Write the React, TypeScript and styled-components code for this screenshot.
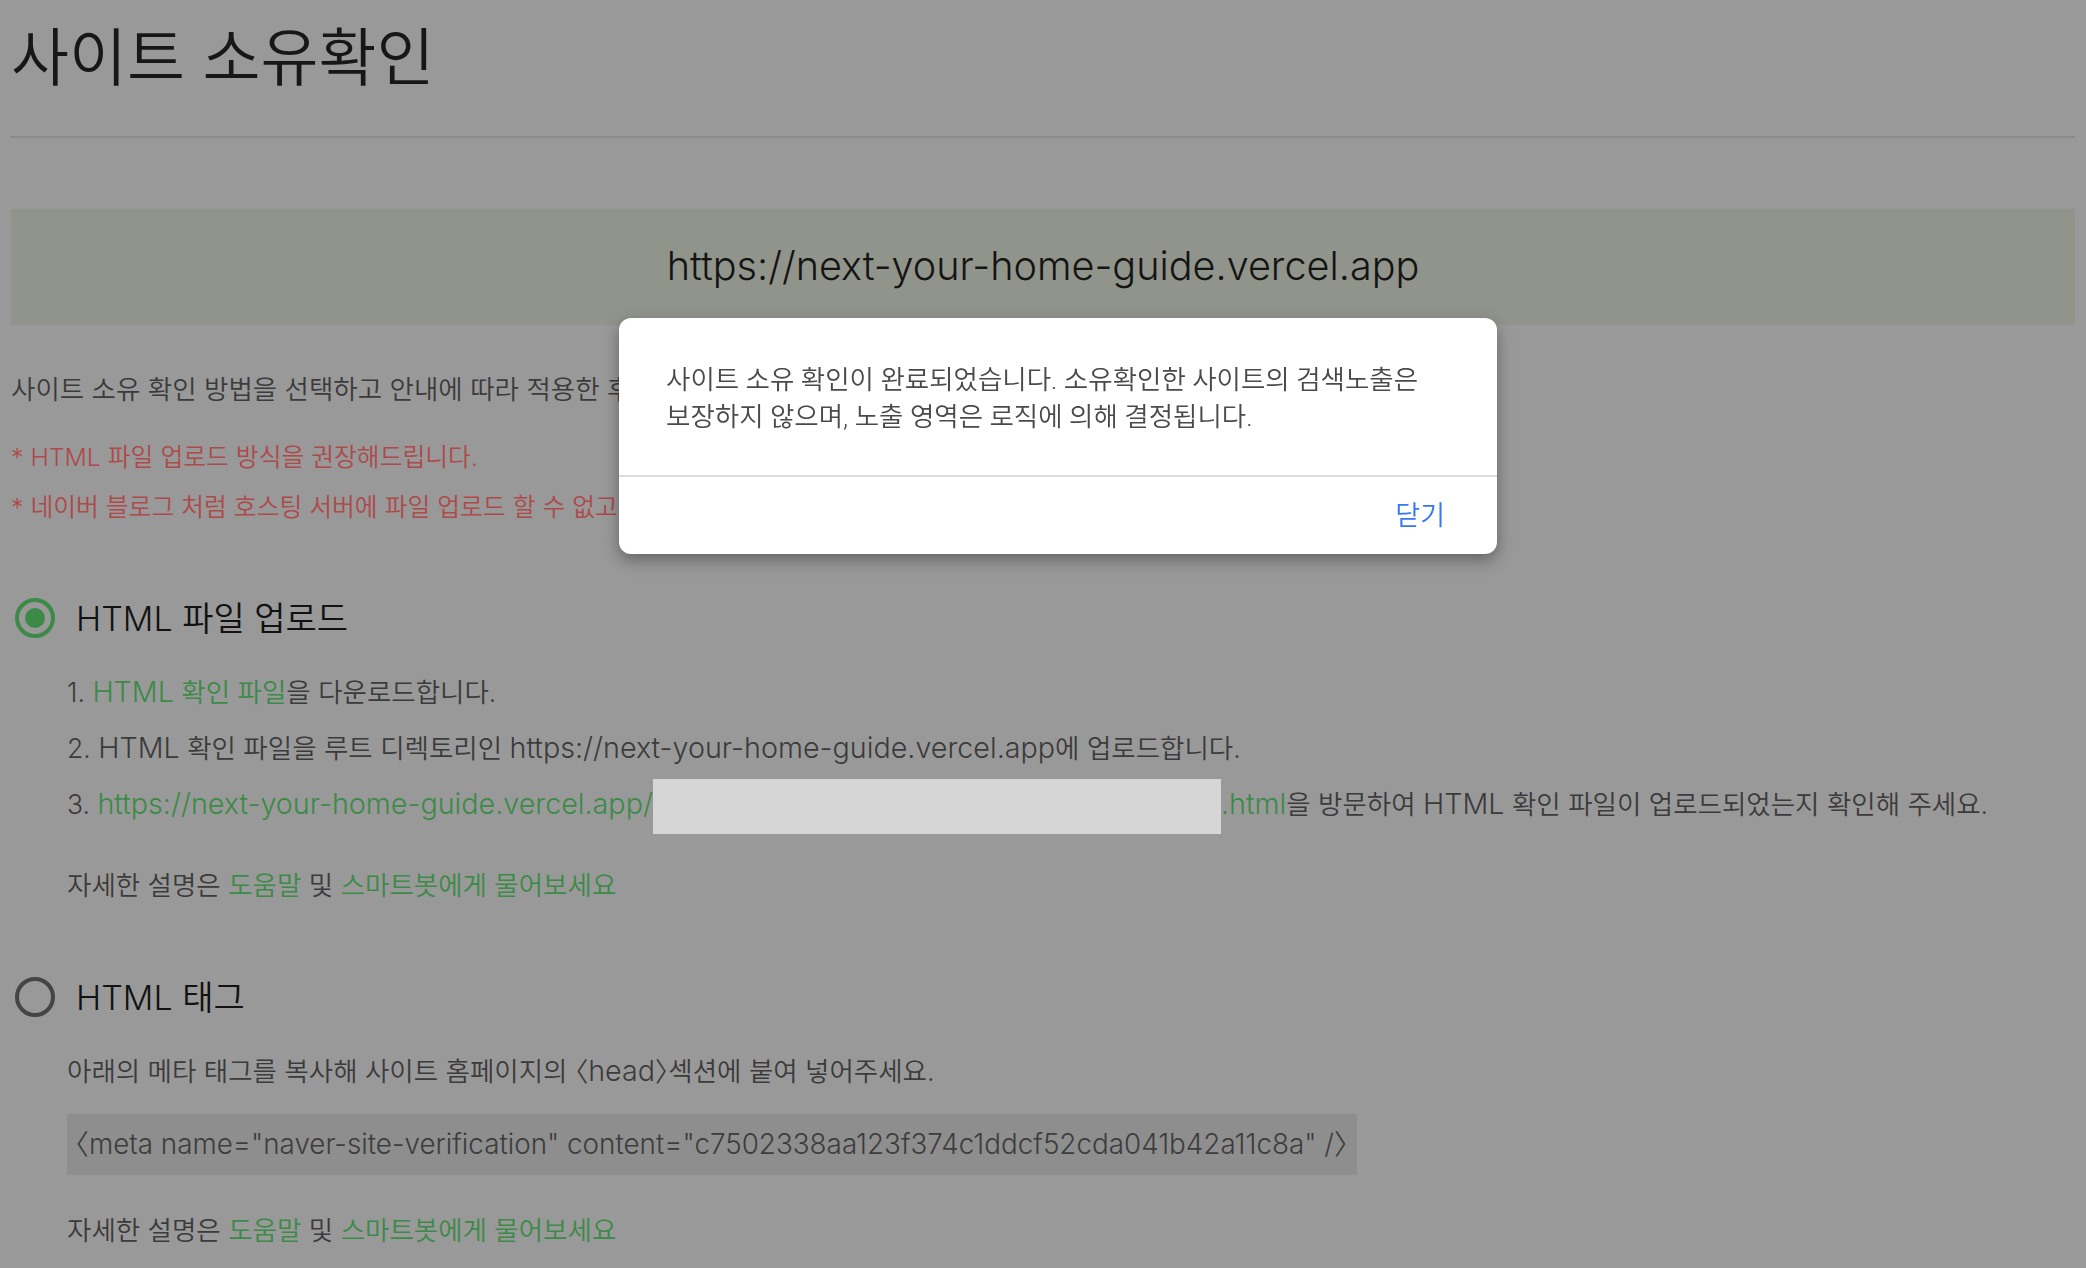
import React from "react";
import styled, { createGlobalStyle } from "styled-components";

const GlobalStyle = createGlobalStyle`
  html, body {
    margin: 0;
    padding: 0;
    overflow: hidden;
    background: #999999;
  }
  body {
    font-family: Inter, "Noto Sans CJK KR", sans-serif;
    font-weight: 350;
  }
`;

const Page = styled.div`
  padding: 0 11px;
  min-height: 1268px;
  box-sizing: border-box;
`;

const Title = styled.h1`
  margin: 21px 0 0;
  font-size: 63px;
  line-height: 72px;
  font-weight: 350;
  color: #171717;
`;

const Divider = styled.hr`
  margin: 43px 0 0;
  border: 0;
  height: 2px;
  background: #8a8a8a;
`;

const UrlBox = styled.div`
  margin-top: 71px;
  height: 116px;
  display: flex;
  align-items: center;
  justify-content: center;
  padding-bottom: 2px;
  box-sizing: border-box;
  background: #91948a;
  font-size: 39.6px;
  color: #141414;
`;

const Text = styled.p<{ $top: number; $indent?: boolean; $color?: string; $size?: number }>`
  margin: ${(p) => p.$top}px 0 0;
  padding-left: ${(p) => (p.$indent ? 56 : 0)}px;
  font-size: ${(p) => p.$size || 26.5}px;
  line-height: 36px;
  color: ${(p) => p.$color || "#3b3b3b"};
  white-space: nowrap;
`;

/* latin runs sit a little larger next to hangul in the original face */
const En = styled.span`
  font-size: 1.083em;
  line-height: 0;
`;

const Link = styled.span`
  color: #3b8a47;
`;

const Bracket = styled.span`
  font-family: "Noto Sans CJK KR", sans-serif;
  font-feature-settings: "halt";
`;

const MethodHeader = styled.div<{ $top: number }>`
  margin-top: ${(p) => p.$top}px;
  display: flex;
  align-items: center;
  gap: 21px;
  padding-left: 4px;
  height: 48px;
`;

const Radio = styled.span<{ $checked?: boolean }>`
  width: 40px;
  height: 40px;
  box-sizing: border-box;
  border-radius: 50%;
  border: 4px solid ${(p) => (p.$checked ? "#3b8a47" : "#454545")};
  display: flex;
  align-items: center;
  justify-content: center;
  &::after {
    content: "";
    display: ${(p) => (p.$checked ? "block" : "none")};
    width: 20px;
    height: 20px;
    border-radius: 50%;
    background: #3b8a47;
  }
`;

const MethodTitle = styled.span`
  font-size: 34px;
  line-height: 48px;
  color: #121212;
  position: relative;
  top: 1px;
`;

const Redacted = styled.span`
  display: inline-block;
  vertical-align: middle;
  width: 568px;
  height: 55px;
  margin: -10px 0;
  background: #d6d6d6;
`;

const CodeBox = styled.div`
  margin: 25px 0 0 56px;
  width: 1290px;
  height: 61px;
  box-sizing: border-box;
  padding: 0 8px;
  background: #8e8e8e;
  font-size: 27.8px;
  line-height: 57px;
  color: #3d3d3d;
  white-space: nowrap;
`;

const Backdrop = styled.div`
  position: fixed;
  inset: 0;
`;

const Dialog = styled.div`
  position: absolute;
  left: 619px;
  top: 318px;
  width: 878px;
  background: #ffffff;
  border-radius: 12px;
  box-shadow: 0 6px 16px rgba(0, 0, 0, 0.35);
  overflow: hidden;
`;

const DialogBody = styled.div`
  padding: 43px 47px 40px;
  font-family: Roboto, "Noto Sans CJK KR", sans-serif;
  font-size: 26.5px;
  line-height: 37px;
  color: #4a4a4a;
`;

const DialogFooter = styled.div`
  border-top: 2px solid #dcdcdc;
  height: 77px;
  display: flex;
  align-items: center;
  justify-content: flex-end;
  padding-right: 52px;
`;

const CloseButton = styled.button`
  border: 0;
  background: none;
  padding: 0;
  font-family: inherit;
  font-weight: inherit;
  font-size: 27px;
  line-height: 36px;
  color: #3478f6;
  cursor: pointer;
`;

const HelpLine = ({ top }: { top: number }) => (
  <Text $top={top} $indent>
    자세한 설명은 <Link>도움말</Link> 및 <Link>스마트봇에게 물어보세요</Link>
  </Text>
);

export default function App() {
  const site = "https://next-your-home-guide.vercel.app";
  return (
    <>
      <GlobalStyle />
      <Page>
        <Title>사이트 소유확인</Title>
        <Divider />
        <UrlBox>{site}</UrlBox>
        <Text $top={46}>
          사이트 소유 확인 방법을 선택하고 안내에 따라 적용한 후 소유확인 버튼을 클릭하세요.
        </Text>
        <Text $top={32} $size={24.8} $color="#ad4a4a">
          * HTML 파일 업로드 방식을 권장해드립니다.
        </Text>
        <Text $top={14} $size={24.8} $color="#ad4a4a">
          * 네이버 블로그 처럼 호스팅 서버에 파일 업로드 할 수 없고, HTML 태그 방식을 이용해 주세요.
        </Text>

        <MethodHeader $top={69}>
          <Radio $checked />
          <MethodTitle>HTML 파일 업로드</MethodTitle>
        </MethodHeader>
        <Text $top={32} $indent>
          1. <Link><En>HTML</En> 확인 파일</Link>을 다운로드합니다.
        </Text>
        <Text $top={20} $indent>
          2. <En>HTML</En> 확인 파일을 루트 디렉토리인 <En>{site}</En>에 업로드합니다.
        </Text>
        <Text $top={20} $indent>
          3. <Link><En>{site}/</En></Link>
          <Redacted />
          <Link><En>.html</En></Link>을 방문하여 <En>HTML</En> 확인 파일이 업로드되었는지 확인해 주세요.
        </Text>
        <HelpLine top={43} />

        <MethodHeader $top={70}>
          <Radio />
          <MethodTitle>HTML 태그</MethodTitle>
        </MethodHeader>
        <Text $top={31} $indent>
          아래의 메타 태그를 복사해 사이트 홈페이지의 <Bracket>〈</Bracket><En>head</En><Bracket>〉</Bracket>섹션에 붙여 넣어주세요.
        </Text>
        <CodeBox>
          <Bracket>〈</Bracket>meta name="naver-site-verification" content="c7502338aa123f374c1ddcf52cda041b42a11c8a" /
          <Bracket>〉</Bracket>
        </CodeBox>
        <HelpLine top={37} />
      </Page>

      <Backdrop>
        <Dialog role="dialog">
          <DialogBody>
            사이트 소유 확인이 완료되었습니다. 소유확인한 사이트의 검색노출은
            <br />
            보장하지 않으며, 노출 영역은 로직에 의해 결정됩니다.
          </DialogBody>
          <DialogFooter>
            <CloseButton>닫기</CloseButton>
          </DialogFooter>
        </Dialog>
      </Backdrop>
    </>
  );
}
